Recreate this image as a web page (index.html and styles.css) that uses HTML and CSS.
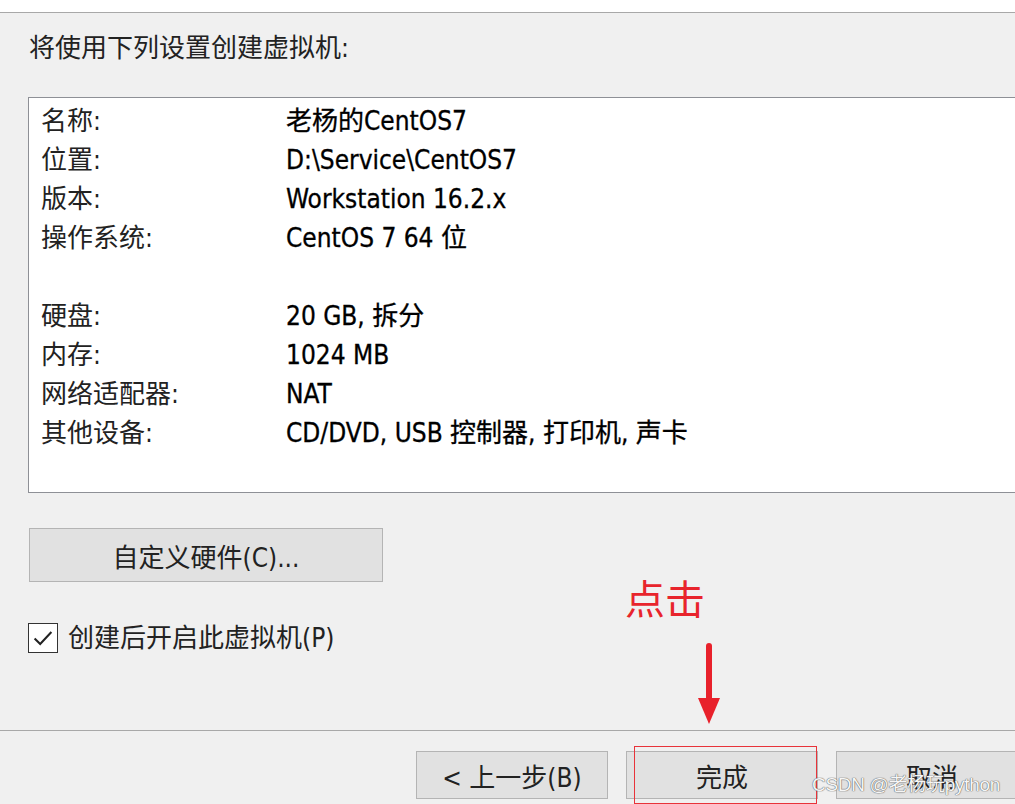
FILE: index.html
```html
<!DOCTYPE html>
<html lang="zh-CN">
<head>
<meta charset="utf-8">
<title>新建虚拟机向导</title>
<link rel="stylesheet" href="styles.css">
</head>
<body>
<div class="topstrip"></div>
<main class="content">
  <h1 class="title">将使用下列设置创建虚拟机:</h1>
  <div class="summary">
    <div class="row"><span class="label">名称:</span><span class="value">老杨的CentOS7</span></div>
    <div class="row"><span class="label">位置:</span><span class="value">D:\Service\CentOS7</span></div>
    <div class="row"><span class="label">版本:</span><span class="value">Workstation 16.2.x</span></div>
    <div class="row"><span class="label">操作系统:</span><span class="value">CentOS 7 64 位</span></div>
    <div class="row"><span class="label"></span><span class="value"></span></div>
    <div class="row"><span class="label">硬盘:</span><span class="value">20 GB, 拆分</span></div>
    <div class="row"><span class="label">内存:</span><span class="value">1024 MB</span></div>
    <div class="row"><span class="label">网络适配器:</span><span class="value">NAT</span></div>
    <div class="row"><span class="label">其他设备:</span><span class="value">CD/DVD, USB 控制器, 打印机, 声卡</span></div>
  </div>
  <button class="btn btn-custom">自定义硬件(C)...</button>
  <label class="check">
    <span class="box"><svg viewBox="0 0 30 30" width="28" height="28"><path d="M6 15.5 L12 21.5 L24 8.5" fill="none" stroke="#222" stroke-width="2.2"/></svg></span>
    <span class="check-label">创建后开启此虚拟机(P)</span>
  </label>
</main>
<footer class="footer">
  <button class="btn btn-nav">&lt; 上一步(B)</button>
  <button class="btn btn-nav">完成</button>
  <button class="btn btn-nav">取消</button>
</footer>
<div class="annot-text">点击</div>
<svg class="annot-arrow" width="30" height="84" viewBox="0 0 30 84">
  <line x1="15" y1="3" x2="15" y2="60" stroke="#e8212b" stroke-width="6" stroke-linecap="round"/>
  <polygon points="4,55 26,55 15,81" fill="#e8212b"/>
</svg>
<div class="annot-box"></div>
<div class="watermark">CSDN @老杨玩python</div>
</body>
</html>
```
FILE: styles.css
```css
html, body {
  margin: 0;
  padding: 0;
}
body {
  width: 1015px;
  height: 804px;
  overflow: hidden;
  background: #f0f0f0;
  font-family: "DejaVu Sans Condensed", "DejaVu Sans", "Noto Sans CJK SC", sans-serif;
  font-size: 26px;
  color: #111;
  position: relative;
}
.topstrip {
  height: 12px;
  background: #ffffff;
  border-bottom: 1px solid #a8a8a8;
}
.content {
  height: 717px;
  padding-left: 28px;
  box-sizing: border-box;
  padding-top: 17px;
}
.title {
  margin: 0 0 0 1px;
  font-weight: normal;
  font-size: 26px;
  line-height: 36px;
  color: #222;
}
.summary {
  margin-top: 31px;
  height: 396px;
  box-sizing: border-box;
  background: #ffffff;
  border: 1px solid #8e9096;
  border-right: none;
  padding: 4px 0 0 12px;
}
.row {
  display: flex;
  height: 39px;
  line-height: 39px;
  white-space: nowrap;
}
.label {
  width: 245px;
  flex: none;
  color: #222;
}
.value {
  color: #000;
  -webkit-text-stroke: 0.3px #000;
}
.btn {
  font-family: "DejaVu Sans Condensed", "DejaVu Sans", "Noto Sans CJK SC", sans-serif;
  font-size: 26px;
  color: #222;
  background: #e1e1e1;
  border: 1.5px solid #b4b4b4;
  padding: 0;
  margin: 0;
  box-sizing: border-box;
}
.btn-custom {
  display: block;
  margin: 35px 0 0 1px;
  width: 354px;
  height: 54px;
}
.check {
  display: flex;
  align-items: center;
  gap: 10px;
  margin-top: 41px;
  height: 30px;
}
.box {
  width: 30px;
  height: 30px;
  box-sizing: border-box;
  border: 1.5px solid #333;
  background: #fff;
  display: flex;
  align-items: center;
  justify-content: center;
}
.box svg {
  display: block;
}
.check-label {
  line-height: 30px;
  color: #222;
}
.footer {
  height: 74px;
  box-sizing: border-box;
  border-top: 1.5px solid #a8a8a8;
  display: flex;
  gap: 18px;
  padding: 20px 0 0 416px;
  overflow: hidden;
  white-space: nowrap;
}
.btn-nav {
  flex: none;
  width: 192px;
  height: 48px;
}
.annot-text {
  position: absolute;
  left: 625px;
  top: 573px;
  font-family: "Noto Sans CJK SC", sans-serif;
  font-size: 40px;
  line-height: 48px;
  color: #e8242c;
}
.annot-arrow {
  position: absolute;
  left: 694px;
  top: 643px;
}
.annot-box {
  position: absolute;
  left: 634px;
  top: 746px;
  width: 183px;
  height: 58px;
  box-sizing: border-box;
  border: 1.5px solid #e8333a;
}
.watermark {
  position: absolute;
  left: 812px;
  top: 772px;
  font-family: "Liberation Sans", "Noto Sans CJK SC", sans-serif;
  font-size: 19px;
  line-height: 26px;
  color: #f6f6f6;
  text-shadow: 0 0 1px #555, 0 0 1px #555;
  letter-spacing: -0.3px;
}
```
